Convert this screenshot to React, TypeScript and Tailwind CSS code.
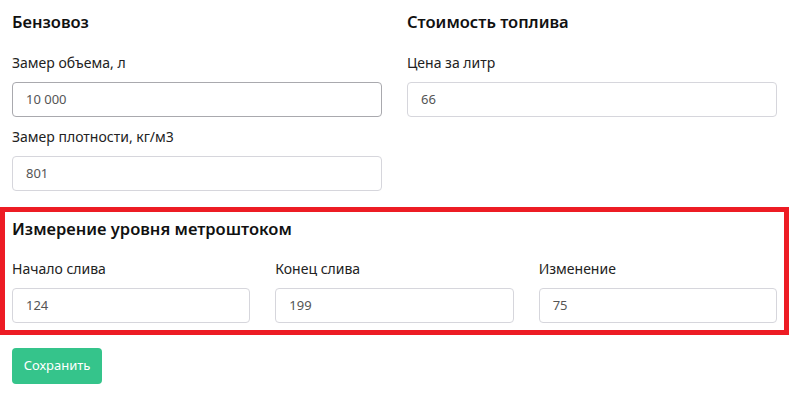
import React from "react";

function Field({ label, value, focused }: { label: string; value: string; focused?: boolean }) {
  return (
    <div className="flex flex-col">
      <label className="text-[14px] leading-5 text-[#222]">{label}</label>
      <div
        className={
          "mt-[9px] h-[35px] rounded-[4px] border bg-white px-[13px] flex items-center text-[13px] text-[#555] " +
          (focused ? "border-[#a9a9ae]" : "border-[#d6d6dc]")
        }
      >
        {value}
      </div>
    </div>
  );
}

export default function App() {
  return (
    <div
      className="min-h-[402px] bg-white pl-3 pr-[17px] pt-[10px]"
      style={{ fontFamily: '"Noto Sans", Inter, sans-serif' }}
    >
      <div className="grid grid-cols-2 gap-x-[25px]">
        <div className="flex flex-col">
          <h2 className="text-[16.5px] leading-6 font-semibold text-[#111] mb-[19px]">Бензовоз</h2>
          <Field label="Замер объема, л" value="10 000" focused />
          <div className="h-[10px]" />
          <Field label="Замер плотности, кг/м3" value="801" />
        </div>
        <div className="flex flex-col">
          <h2 className="text-[16.5px] leading-6 font-semibold text-[#111] mb-[19px]">Стоимость топлива</h2>
          <Field label="Цена за литр" value="66" />
        </div>
      </div>

      <div className="mt-4 -ml-3 mr-[-12px] border-[5px] border-[#ed1c24] px-[7px] pt-[5px] pb-[7px]">
        <h2 className="text-[16.5px] leading-6 font-semibold text-[#111] mb-[18px]">
          Измерение уровня метроштоком
        </h2>
        <div className="grid grid-cols-3 gap-x-[25px]">
          <Field label="Начало слива" value="124" />
          <Field label="Конец слива" value="199" />
          <Field label="Изменение" value="75" />
        </div>
      </div>

      <button className="mt-[13px] h-9 w-[90px] rounded-[4px] bg-[#35c48b] text-[13px] text-white">
        Сохранить
      </button>
    </div>
  );
}
